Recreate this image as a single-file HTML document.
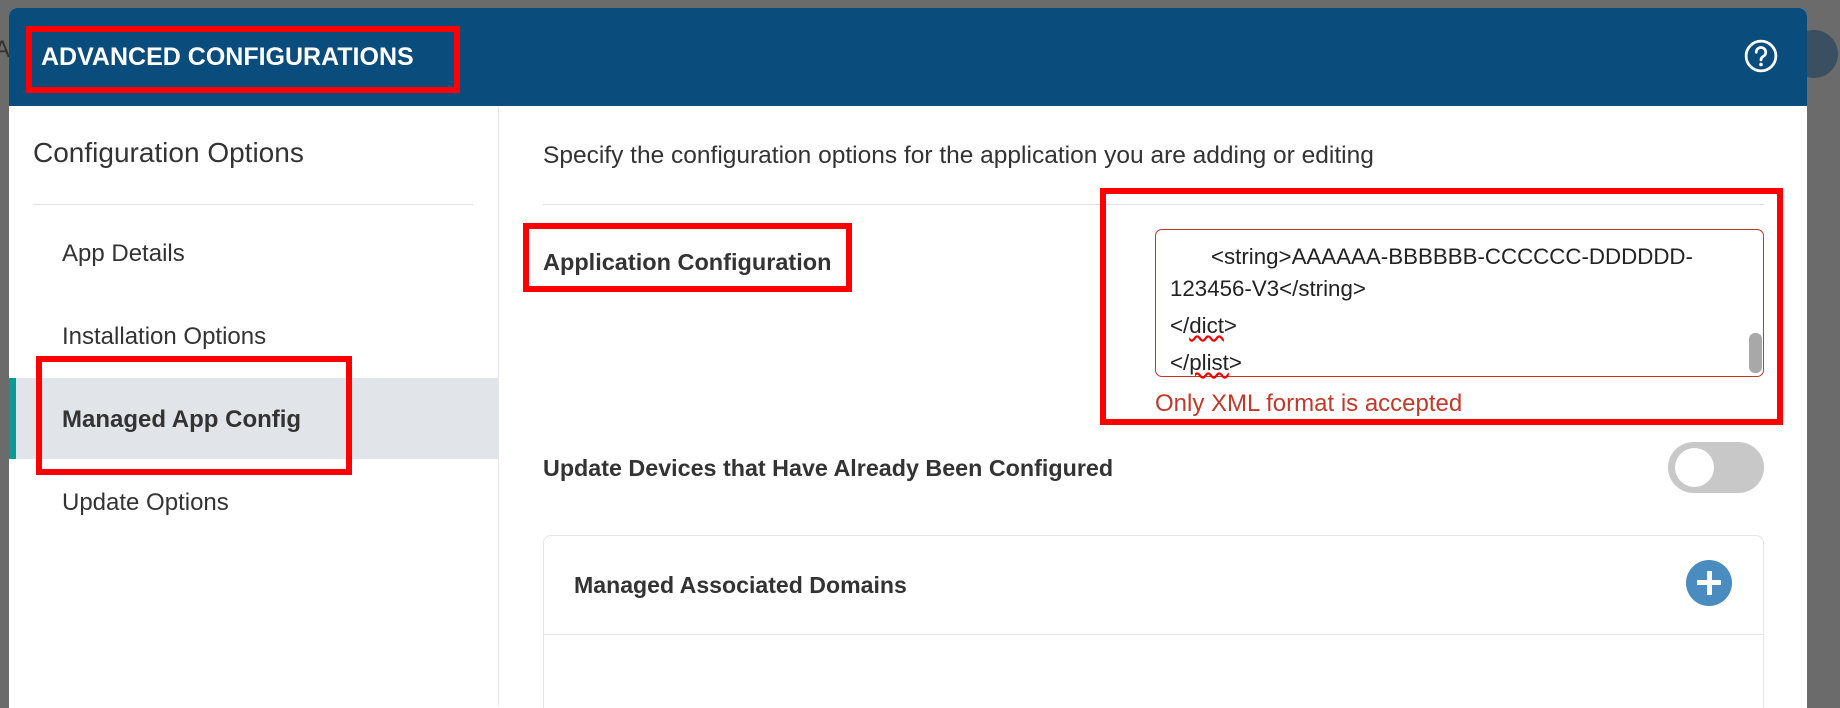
<!DOCTYPE html>
<html><head><meta charset="utf-8"><style>
*{box-sizing:border-box;margin:0;padding:0}
body{width:1840px;height:669px;overflow:hidden;background:#6b6b6b;font-family:"Liberation Sans",sans-serif;position:relative}
.abs{position:absolute}
.modal{left:9px;top:8px;width:1798px;height:700px;background:#fff;border-radius:8px 8px 0 0;overflow:hidden}
.hdr{left:0;top:0;width:1798px;height:98px;background:#0a4d7c}
.t{white-space:nowrap;line-height:1}
.rb{border:6px solid #ff0000}
</style></head><body>
<div class="abs t" style="left:-6px;top:38px;font-size:24px;color:#333">A</div>
<div class="abs" style="left:1790px;top:30px;width:48px;height:48px;border-radius:50%;background:#3a4f60"></div>
<div class="abs modal">
  <div class="abs hdr"></div>
  <div class="abs t" style="left:32px;top:37px;font-size:25px;font-weight:bold;color:#fff">ADVANCED CONFIGURATIONS</div>
  <svg class="abs" style="left:1735px;top:31px" width="34" height="34" viewBox="0 0 32 32"><circle cx="16" cy="16" r="14" fill="none" stroke="#fff" stroke-width="2.6"/><path d="M11.5 12.5a4.5 4.5 0 1 1 6.5 4c-1.4.8-2 1.6-2 3.2" fill="none" stroke="#fff" stroke-width="2.6" stroke-linecap="round"/><circle cx="16" cy="24" r="1.7" fill="#fff"/></svg>
  <div class="abs" style="left:489px;top:98px;width:1px;height:600px;background:#e6e6e6"></div>
  <div class="abs t" style="left:24px;top:131px;font-size:28px;color:#333">Configuration Options</div>
  <div class="abs" style="left:24px;top:196px;width:440px;height:1px;background:#e3e3e3"></div>
  <div class="abs t" style="left:53px;top:234px;font-size:24px;color:#333">App Details</div>
  <div class="abs t" style="left:53px;top:317px;font-size:24px;color:#333">Installation Options</div>
  <div class="abs" style="left:0;top:370px;width:489px;height:81px;background:#e1e5e9"></div>
  <div class="abs" style="left:0;top:370px;width:7px;height:81px;background:#0a9a94"></div>
  <div class="abs t" style="left:53px;top:400px;font-size:24px;font-weight:bold;color:#333">Managed App Config</div>
  <div class="abs t" style="left:53px;top:483px;font-size:24px;color:#333">Update Options</div>
  <div class="abs t" style="left:534px;top:136px;font-size:24.5px;color:#333">Specify the configuration options for the application you are adding or editing</div>
  <div class="abs" style="left:534px;top:196px;width:1221px;height:1px;background:#e3e3e3"></div>
  <div class="abs t" style="left:534px;top:243px;font-size:23.5px;font-weight:bold;color:#333">Application Configuration</div>
  <div class="abs" style="left:1146px;top:221px;width:609px;height:148px;border:1px solid #c0392b;border-radius:7px"></div>
  <div class="abs t" style="left:1202px;top:238px;font-size:22.3px;color:#222">&lt;string&gt;AAAAAA-BBBBBB-CCCCCC-DDDDDD-</div>
  <div class="abs t" style="left:1161px;top:270px;font-size:22.3px;color:#222">123456-V3&lt;/string&gt;</div>
  <div class="abs t" style="left:1161px;top:307px;font-size:22.3px;color:#222">&lt;/<span style="text-decoration:underline wavy #e00">dict</span>&gt;</div>
  <div class="abs t" style="left:1161px;top:344px;font-size:22.3px;color:#222">&lt;/<span style="text-decoration:underline wavy #e00">plist</span>&gt;</div>
  <div class="abs" style="left:1740px;top:325px;width:13px;height:40px;border-radius:6px;background:#a8a8a8"></div>
  <div class="abs t" style="left:1146px;top:384px;font-size:24px;color:#c0392b">Only XML format is accepted</div>
  <div class="abs t" style="left:534px;top:449px;font-size:23.3px;font-weight:bold;color:#333">Update Devices that Have Already Been Configured</div>
  <div class="abs" style="left:1659px;top:434px;width:96px;height:51px;border-radius:26px;background:#c8c8c8"></div>
  <div class="abs" style="left:1666px;top:440px;width:39px;height:39px;border-radius:50%;background:#fff"></div>
  <div class="abs" style="left:534px;top:527px;width:1221px;height:200px;border:1px solid #e5e5e5;border-radius:8px;background:#fff"></div>
  <div class="abs" style="left:534px;top:626px;width:1221px;height:1px;background:#e5e5e5"></div>
  <div class="abs t" style="left:565px;top:566px;font-size:23.1px;font-weight:bold;color:#333">Managed Associated Domains</div>
  <div class="abs" style="left:1677px;top:552px;width:46px;height:46px;border-radius:50%;background:#4a8bc0"></div>
  <div class="abs" style="left:1688px;top:572px;width:24px;height:5px;background:#fff"></div>
  <div class="abs" style="left:1697.5px;top:563px;width:5px;height:24px;background:#fff"></div>
</div>
<div class="abs rb" style="left:26px;top:26px;width:434px;height:67px"></div>
<div class="abs rb" style="left:36px;top:356px;width:316px;height:119px"></div>
<div class="abs rb" style="left:523px;top:223px;width:329px;height:69px"></div>
<div class="abs rb" style="left:1100px;top:188px;width:683px;height:237px"></div>
</body></html>
